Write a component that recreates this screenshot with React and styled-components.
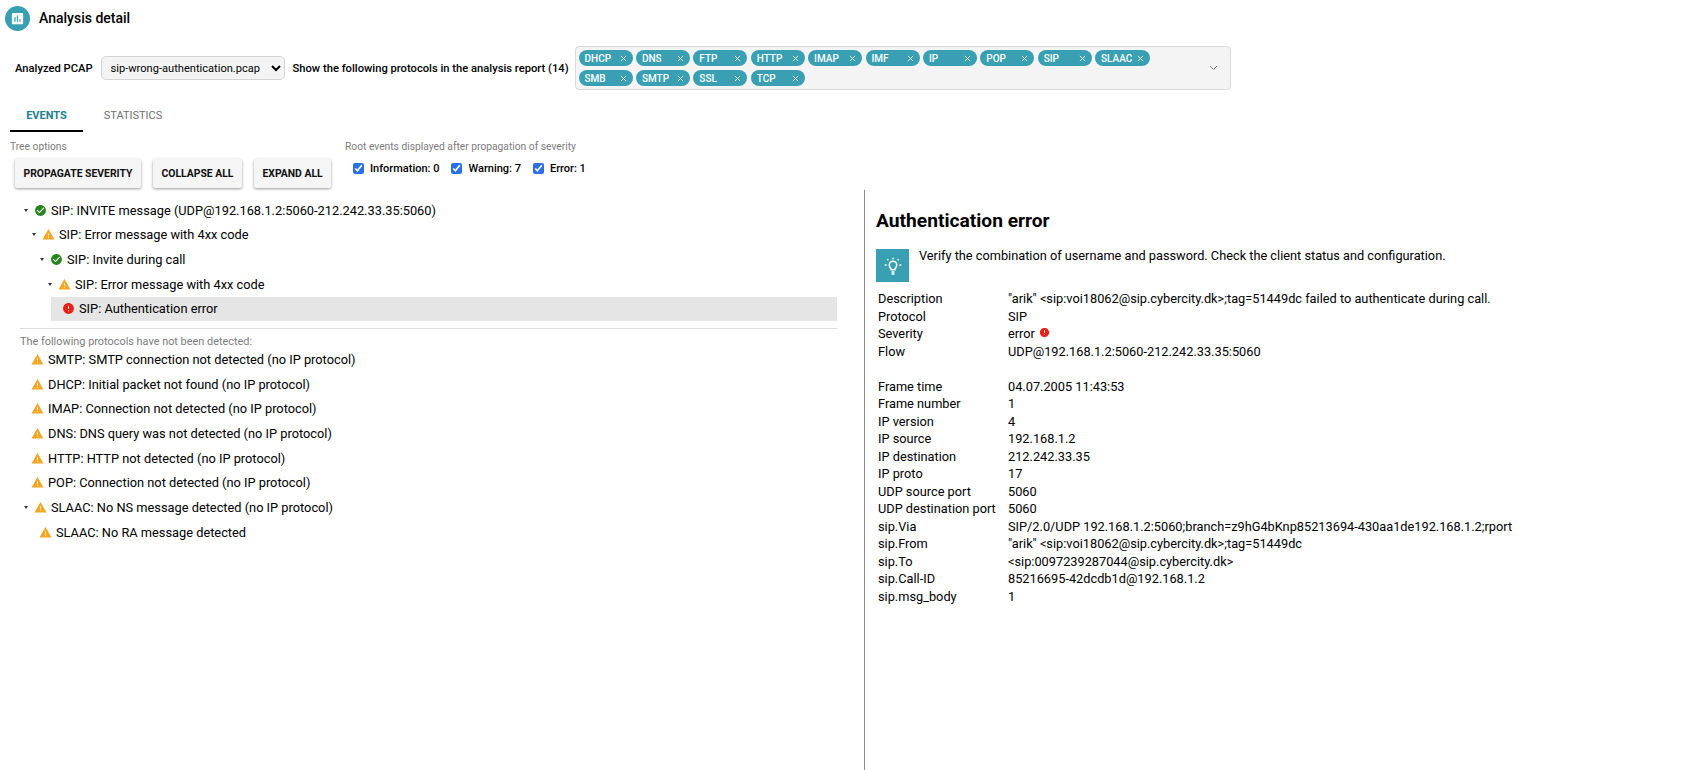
import React from 'react';
import styled, { createGlobalStyle } from 'styled-components';

const teal = '#38a0b2';

const GlobalStyle = createGlobalStyle`
    html, body {
        margin: 0;
        padding: 0;
        background: #fff;
        color: #000;
        font-family: Roboto, "Liberation Sans", sans-serif;
    }
`;

const Page = styled.div`
    width: 1700px;
    height: 770px;
    display: flex;
    flex-direction: column;
    overflow: hidden;
`;

const Header = styled.div`
    display: flex;
    align-items: center;
    gap: 9px;
    height: 24px;
    padding: 6px 0 0 5px;
`;

const HeaderIcon = styled.div`
    width: 25px;
    height: 25px;
    border-radius: 50%;
    background: ${teal};
    display: flex;
    align-items: center;
    justify-content: center;
`;

const Title = styled.div`
    font-size: 14px;
    font-weight: 500;
`;

const PcapRow = styled.div`
    display: flex;
    align-items: center;
    margin-top: 16px;
    padding-left: 15px;
`;

const BoldLabel = styled.label`
    font-size: 11.2px;
    font-weight: 500;
    white-space: nowrap;
`;

const PcapSelect = styled.select`
    width: 184px;
    height: 24px;
    margin: 0 8px 0 8px;
    padding: 0 0 0 5px;
    font-family: inherit;
    font-size: 11.1px;
    background: #f4f4f4;
    border: 1px solid #d4d4d4;
    border-radius: 5px;
    color: #000;
`;

const ProtocolBox = styled.div`
    width: 656px;
    height: 44px;
    box-sizing: border-box;
    margin-left: 6px;
    padding: 3px;
    display: flex;
    justify-content: space-between;
    background: #f4f4f4;
    border: 1px solid #d9d9d9;
    border-radius: 4px;
`;

const ChipList = styled.div`
    display: flex;
    flex-wrap: wrap;
    align-content: flex-start;
    gap: 4px 3.4px;
    width: 590px;
`;

const Chip = styled.div`
    min-width: 54px;
    height: 16px;
    box-sizing: border-box;
    padding: 0 6px;
    display: flex;
    align-items: center;
    justify-content: space-between;
    gap: 5px;
    border-radius: 8px;
    background: ${teal};
    color: #fff;
    font-size: 10px;
    font-weight: 500;
`;

const ChevronSlot = styled.div`
    display: flex;
    align-items: center;
    padding-right: 9px;
`;

const Tabs = styled.div`
    display: flex;
    margin: 9px 0 0 10px;
`;

const Tab = styled.div`
    width: ${props => props.$width}px;
    height: 33px;
    box-sizing: border-box;
    padding-top: 2px;
    display: flex;
    align-items: center;
    justify-content: center;
    font-size: 11px;
    font-weight: ${props => (props.$active ? 700 : 400)};
    color: ${props => (props.$active ? '#217f92' : '#6f6f6f')};
    border-bottom: 2px solid ${props => (props.$active ? '#000' : 'transparent')};
`;

const OptionsBar = styled.div`
    display: flex;
    height: 49px;
    margin-top: 9px;
`;

const TreeOptions = styled.div`
    width: 335px;
    padding-left: 10px;
`;

const RootEvents = styled.div``;

const SmallCaption = styled.div`
    font-size: 10.25px;
    line-height: 12px;
    color: #7d7d7d;
`;

const ButtonRow = styled.div`
    display: flex;
    gap: 12px;
    margin: 6px 0 0 5px;
`;

const Button = styled.button`
    height: 29px;
    padding: 0 8.5px;
    font-family: inherit;
    font-size: 10.4px;
    font-weight: 700;
    color: #111;
    background: #f5f5f5;
    border: 0;
    border-radius: 2px;
    box-shadow: 0 1px 3px rgba(0, 0, 0, 0.4);
`;

const Checks = styled.div`
    display: flex;
    align-items: center;
    margin: 9px 0 0 8px;
`;

const CheckLabel = styled.label`
    display: flex;
    align-items: center;
    gap: 6px;
    margin-right: 12px;
    font-size: 11px;
    font-weight: 500;
`;

const CheckBox = styled.input`
    width: 11px;
    height: 11px;
    margin: 0;
    accent-color: #2b6fe8;
`;

const Split = styled.div`
    flex: 1;
    display: grid;
    grid-template-columns: 865px 1fr;
    min-height: 0;
`;

const TreePane = styled.div`
    padding: 8px 27px 0 20px;
    border-right: 1px solid #8a8a8a;
`;

const Row = styled.div`
    height: 24.65px;
    display: flex;
    align-items: center;
    padding-left: ${props => props.$indent}px;
    margin-left: ${props => props.$offset || 0}px;
    font-size: 12.8px;
    background: ${props => (props.$selected ? '#e5e5e5' : 'transparent')};
`;

const Caret = styled.span`
    width: 0;
    height: 0;
    margin: 0 6px 0 3px;
    border-left: 2.5px solid transparent;
    border-right: 2.5px solid transparent;
    border-top: 3px solid #333;
`;

const RowIcon = styled.svg`
    width: 13px;
    height: 13px;
    margin-right: 4px;
    flex: none;
`;

const Rule = styled.hr`
    height: 1px;
    margin: 7px 0 0;
    border: 0;
    background: #dcdcdc;
`;

const NoticeCaption = styled(SmallCaption)`
    margin: 8px 0 0;
    font-size: 10.9px;
    line-height: 10px;
`;

const DetailPane = styled.div`
    padding: 20px 0 0 11px;
`;

const DetailTitle = styled.h2`
    margin: 0;
    font-size: 19.2px;
    line-height: 22px;
    font-weight: 700;
`;

const Hint = styled.div`
    display: flex;
    gap: 10px;
    margin: 17px 0 0;
    font-size: 12.75px;
    line-height: 14px;
`;

const HintIcon = styled.div`
    width: 33px;
    height: 33px;
    background: ${teal};
    display: flex;
    align-items: center;
    justify-content: center;
`;

const Table = styled.div`
    display: grid;
    grid-template-columns: 130px 1fr;
    margin: 8px 0 0 2px;
    font-size: 12.77px;
    grid-auto-rows: 17.5px;
    align-items: center;
`;

const TableGap = styled.div`
    grid-column: 1 / -1;
`;

const SeverityValue = styled.div`
    display: flex;
    align-items: center;
    gap: 4px;
`;

const TinyIcon = styled.svg`
    width: 11px;
    height: 11px;
    margin-top: -3px;
`;

const ICONS = {
    ok: { color: '#23851b', d: 'M12 2C6.48 2 2 6.48 2 12s4.48 10 10 10 10-4.48 10-10S17.52 2 12 2zm-2 15l-5-5 1.41-1.41L10 14.17l7.59-7.59L19 8l-9 9z' },
    warning: { color: '#f5a623', d: 'M1 21h22L12 2 1 21zm12-3h-2v-2h2v2zm0-4h-2v-4h2v4z' },
    error: { color: '#f01e12', d: 'M12 2C6.48 2 2 6.48 2 12s4.48 10 10 10 10-4.48 10-10S17.52 2 12 2zm1 15h-2v-2h2v2zm0-4h-2V7h2v6z' },
};

const SeverityIcon = ({ as: Icon = RowIcon, kind }) => (
    <Icon viewBox="0 0 24 24">
        <path fill={ICONS[kind].color} d={ICONS[kind].d} />
    </Icon>
);

const chips = ['DHCP', 'DNS', 'FTP', 'HTTP', 'IMAP', 'IMF', 'IP', 'POP', 'SIP', 'SLAAC', 'SMB', 'SMTP', 'SSL', 'TCP'];

const eventRows = [
    { indent: 1, caret: true, kind: 'ok', text: 'SIP: INVITE message (UDP@192.168.1.2:5060-212.242.33.35:5060)' },
    { indent: 9, caret: true, kind: 'warning', text: 'SIP: Error message with 4xx code' },
    { indent: 17, caret: true, kind: 'ok', text: 'SIP: Invite during call' },
    { indent: 25, caret: true, kind: 'warning', text: 'SIP: Error message with 4xx code' },
    { indent: 11, offset: 31, selected: true, kind: 'error', text: 'SIP: Authentication error' },
];

const missingRows = [
    { indent: 11, text: 'SMTP: SMTP connection not detected (no IP protocol)' },
    { indent: 11, text: 'DHCP: Initial packet not found (no IP protocol)' },
    { indent: 11, text: 'IMAP: Connection not detected (no IP protocol)' },
    { indent: 11, text: 'DNS: DNS query was not detected (no IP protocol)' },
    { indent: 11, text: 'HTTP: HTTP not detected (no IP protocol)' },
    { indent: 11, text: 'POP: Connection not detected (no IP protocol)' },
    { indent: 1, caret: true, text: 'SLAAC: No NS message detected (no IP protocol)' },
    { indent: 19, text: 'SLAAC: No RA message detected' },
];

const details = [
    ['Description', '"arik" <sip:voi18062@sip.cybercity.dk>;tag=51449dc failed to authenticate during call.'],
    ['Protocol', 'SIP'],
    ['Severity', 'severity'],
    ['Flow', 'UDP@192.168.1.2:5060-212.242.33.35:5060'],
    null,
    ['Frame time', '04.07.2005 11:43:53'],
    ['Frame number', '1'],
    ['IP version', '4'],
    ['IP source', '192.168.1.2'],
    ['IP destination', '212.242.33.35'],
    ['IP proto', '17'],
    ['UDP source port', '5060'],
    ['UDP destination port', '5060'],
    ['sip.Via', 'SIP/2.0/UDP 192.168.1.2:5060;branch=z9hG4bKnp85213694-430aa1de192.168.1.2;rport'],
    ['sip.From', '"arik" <sip:voi18062@sip.cybercity.dk>;tag=51449dc'],
    ['sip.To', '<sip:0097239287044@sip.cybercity.dk>'],
    ['sip.Call-ID', '85216695-42dcdb1d@192.168.1.2'],
    ['sip.msg_body', '1'],
];

const TreeRow = ({ indent, offset, caret, selected, kind = 'warning', text }) => (
    <Row $indent={indent} $offset={offset} $selected={selected}>
        {caret && <Caret />}
        <SeverityIcon kind={kind} />
        {text}
    </Row>
);

const App = () => (
    <Page>
        <GlobalStyle />
        <Header>
            <HeaderIcon>
                <svg width="15" height="15" viewBox="0 0 24 24">
                    <path fill="#fff" d="M19 3H5c-1.1 0-2 .9-2 2v14c0 1.1.9 2 2 2h14c1.1 0 2-.9 2-2V5c0-1.1-.9-2-2-2zM9 17H7v-7h2v7zm4 0h-2V7h2v10zm4 0h-2v-4h2v4z" />
                </svg>
            </HeaderIcon>
            <Title>Analysis detail</Title>
        </Header>
        <PcapRow>
            <BoldLabel>Analyzed PCAP</BoldLabel>
            <PcapSelect defaultValue="sip">
                <option value="sip">sip-wrong-authentication.pcap</option>
            </PcapSelect>
            <BoldLabel>Show the following protocols in the analysis report (14)</BoldLabel>
            <ProtocolBox>
                <ChipList>
                    {chips.map(chip => (
                        <Chip key={chip}>
                            {chip}
                            <svg width="7" height="7" viewBox="0 0 8 8">
                                <path d="M1 1l6 6M7 1L1 7" stroke="#fff" strokeWidth="1" />
                            </svg>
                        </Chip>
                    ))}
                </ChipList>
                <ChevronSlot>
                    <svg width="9" height="6" viewBox="0 0 9 6">
                        <path d="M1 1l3.5 3.5L8 1" fill="none" stroke="#777" strokeWidth="1" />
                    </svg>
                </ChevronSlot>
            </ProtocolBox>
        </PcapRow>
        <Tabs>
            <Tab $width={73} $active>EVENTS</Tab>
            <Tab $width={100}>STATISTICS</Tab>
        </Tabs>
        <OptionsBar>
            <TreeOptions>
                <SmallCaption>Tree options</SmallCaption>
                <ButtonRow>
                    <Button>PROPAGATE SEVERITY</Button>
                    <Button>COLLAPSE ALL</Button>
                    <Button>EXPAND ALL</Button>
                </ButtonRow>
            </TreeOptions>
            <RootEvents>
                <SmallCaption>Root events displayed after propagation of severity</SmallCaption>
                <Checks>
                    <CheckLabel><CheckBox type="checkbox" defaultChecked />Information: 0</CheckLabel>
                    <CheckLabel><CheckBox type="checkbox" defaultChecked />Warning: 7</CheckLabel>
                    <CheckLabel><CheckBox type="checkbox" defaultChecked />Error: 1</CheckLabel>
                </Checks>
            </RootEvents>
        </OptionsBar>
        <Split>
            <TreePane>
                {eventRows.map((row, i) => <TreeRow key={i} {...row} />)}
                <Rule />
                <NoticeCaption>The following protocols have not been detected:</NoticeCaption>
                {missingRows.map((row, i) => <TreeRow key={i} {...row} />)}
            </TreePane>
            <DetailPane>
                <DetailTitle>Authentication error</DetailTitle>
                <Hint>
                    <HintIcon>
                        <svg width="18" height="18" viewBox="0 0 24 24" fill="none" stroke="#fff" strokeWidth="2">
                            <path d="M10 20h4M10 22.500h4M9.500 17c0-2.500-2.500-3-2.500-6.500a5 5 0 0 1 10 0c0 3.500-2.500 4-2.500 6.500z" />
                            <path d="M12 1v2M4.500 3l1.400 1.400M19.500 3l-1.400 1.400M1 10.500h2.500M20.500 10.500H23" />
                        </svg>
                    </HintIcon>
                    <div>Verify the combination of username and password. Check the client status and configuration.</div>
                </Hint>
                <Table>
                    {details.map((item, i) => item ? (
                        <React.Fragment key={i}>
                            <div>{item[0]}</div>
                            {item[1] === 'severity' ? (
                                <SeverityValue>error <SeverityIcon as={TinyIcon} kind="error" /></SeverityValue>
                            ) : <div>{item[1]}</div>}
                        </React.Fragment>
                    ) : <TableGap key={i} />)}
                </Table>
            </DetailPane>
        </Split>
    </Page>
);

export default App;
